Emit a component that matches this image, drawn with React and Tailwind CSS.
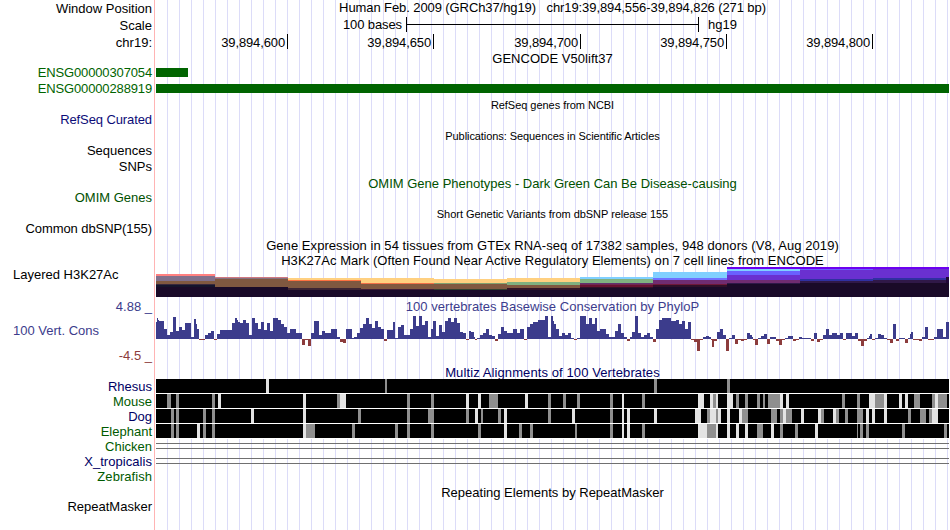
import React from "react"

// label column, top to bottom
const labels = [
  { text: "Window Position", cls: "mt-px text-right text-black" },
  { text: "Scale", cls: "mt-[2px] text-right text-black" },
  { text: "chr19:", cls: "mt-[2px] text-right text-black" },
  { text: "ENSG00000307054", cls: "mt-[15px] text-right tracking-[-0.14px] text-[#006400]" },
  { text: "ENSG00000288919", cls: "mt-px text-right tracking-[-0.14px] text-[#006400]" },
  { text: "RefSeq Curated", cls: "mt-4 text-right tracking-[-0.1px] text-[#0c0c78]" },
  { text: "Sequences", cls: "mt-4 text-right text-black" },
  { text: "SNPs", cls: "mt-px text-right text-black" },
  { text: "OMIM Genes", cls: "mt-4 text-right text-[#005000]" },
  { text: "Common dbSNP(155)", cls: "mt-4 text-right tracking-[-0.08px] text-black" },
  { text: "Layered H3K27Ac", cls: "mt-[31px] pl-[13px] text-left text-black" },
  { text: "4.88 _", cls: "mt-[17px] text-right text-[#3c3c8c]" },
  { text: "100 Vert. Cons", cls: "mt-[9px] pl-[13px] text-left text-[#3c3c8c]" },
  { text: "-4.5 _", cls: "mt-[10px] text-right text-[#8c3c3c]" },
  { text: "Rhesus", cls: "mt-4 text-right text-[#000064]" },
  { text: "Mouse", cls: "text-right text-[#005a00]" },
  { text: "Dog", cls: "text-right text-[#000064]" },
  { text: "Elephant", cls: "text-right text-[#005a00]" },
  { text: "Chicken", cls: "text-right text-[#005a00]" },
  { text: "X_tropicalis", cls: "text-right tracking-[0.05px] text-[#000064]" },
  { text: "Zebrafish", cls: "text-right tracking-[0.05px] text-[#005a00]" },
  { text: "RepeatMasker", cls: "mt-[15px] text-right text-black" },
]

const positions = [
  { text: "39,894,600", cls: "w-[132px]" },
  { text: "39,894,650", cls: "w-[146px]" },
  { text: "39,894,700", cls: "w-[147px]" },
  { text: "39,894,750", cls: "w-[146px]" },
  { text: "39,894,800", cls: "w-[146px]" },
]

// each column: start x, then [top y, colour] layers, painted down to y = 30
const h3k27ac = [
  { x: 0, layers: [[7, "#ff8080"], [9, "#80708c"], [14, "#805840"], [17, "#38283c"], [18, "#14142c"], [20, "#1a0a28"]] },
  { x: 59, layers: [[10, "#d07880"], [11, "#857080"], [12, "#805840"], [20, "#1a0a28"]] },
  { x: 132, layers: [[11, "#ffd080"], [13, "#ff7040"], [14, "#805840"], [21, "#3c2434"], [23, "#1a0a28"]] },
  { x: 205, layers: [[11, "#ffd080"], [16, "#f07048"], [17, "#805840"], [22, "#3c1c38"], [23, "#1a0a28"]] },
  { x: 278, layers: [[12, "#ffd080"], [16, "#80a070"], [17, "#805840"], [22, "#304030"], [23, "#1a0a28"]] },
  { x: 351, layers: [[11, "#ffd080"], [15, "#80b080"], [18, "#805840"], [21, "#301428"], [23, "#1a0a28"]] },
  { x: 424, layers: [[10, "#80d0ff"], [12, "#80b080"], [16, "#603070"], [17, "#702850"], [18, "#681030"], [20, "#301028"], [21, "#1a0a28"]] },
  { x: 497, layers: [[5, "#80d0ff"], [11, "#7070ff"], [13, "#702c70"], [17, "#701838"], [18, "#301028"], [20, "#1a0a28"]] },
  { x: 571, layers: [[0, "#6c00f0"], [2, "#80d0ff"], [4, "#6a60ff"], [8, "#6a30d0"], [13, "#702c70"], [16, "#301848"], [17, "#1a0a28"]] },
  { x: 644, layers: [[0, "#6c00f0"], [2, "#6a60ff"], [3, "#6a30d0"], [12, "#3030a0"], [14, "#301848"], [16, "#1a0a28"]] },
  { x: 717, layers: [[0, "#6c00f0"], [2, "#6a30d0"], [11, "#3030a0"], [13, "#301848"], [16, "#1a0a28"]] },
  { x: 790, layers: [[0, "#6c00f0"], [2, "#6a30d0"], [10, "#200838"], [16, "#1a0a28"]] },
]

// start x, score height (below the axis when negative)
const phyloP = [
  [0, 17], [1, 21], [2, 19], [3, 18], [8, 10], [11, 4], [14, 7], [17, 22], [20, 8], [23, 12], [26, 9], [29, 16],
  [35, 2], [38, 20], [40, 15], [41, 10], [43, -1], [49, 4], [52, 6], [55, 8], [58, -1], [61, 5], [64, 9], [76, 16],
  [79, 21], [81, 19], [82, 17], [84, 16], [87, 19], [90, 16], [93, 4], [96, 21], [99, 16], [102, 10], [105, 17],
  [108, 9], [111, 16], [114, 8], [117, 21], [122, 19], [125, 15], [128, 12], [131, 6], [134, 10], [140, 6],
  [146, -6], [149, -1], [152, -7], [155, 6], [158, 18], [163, 4], [166, 8], [169, 6], [175, 10], [181, 2],
  [184, -3], [187, -4], [190, 10], [196, 1], [198, 2], [201, 6], [204, 11], [207, 15], [210, 21], [213, 15],
  [216, 11], [219, 18], [222, 12], [225, 10], [228, -2], [231, 9], [237, 17], [239, 1], [242, 12], [245, 14],
  [248, 4], [254, 10], [257, 23], [260, 13], [263, 23], [266, 14], [269, 18], [272, 2], [275, 10], [277, 18],
  [280, 3], [283, 14], [286, 7], [289, 18], [292, 21], [295, 17], [298, 21], [301, 16], [304, 7], [307, 6],
  [310, -1], [313, 8], [315, 7], [318, 2], [319, -1], [321, 1], [324, 4], [327, 6], [330, 10], [333, 4], [336, 3],
  [339, -2], [342, 5], [345, 12], [348, 8], [351, 6], [357, 10], [361, 6], [364, 10], [368, -1], [371, 12],
  [374, 15], [377, 17], [382, 19], [389, 23], [392, 2], [395, 23], [397, 18], [398, 15], [400, 10], [403, 3],
  [406, 6], [409, 4], [412, 6], [415, 1], [418, -1], [421, 1], [424, 23], [430, 15], [433, 21], [436, 15],
  [439, 21], [441, 8], [444, 10], [450, 5], [453, 2], [459, 8], [462, 15], [465, 6], [468, 2], [471, -2],
  [474, 2], [476, 7], [479, 23], [482, 6], [485, 2], [488, 4], [491, 6], [494, 2], [497, -3], [500, 10], [503, 19],
  [506, 21], [515, 18], [520, 19], [523, 15], [526, 18], [529, 10], [532, 17], [535, -1], [538, -3], [541, -12],
  [544, -1], [547, 2], [550, 3], [553, 2], [555, -1], [556, -8], [558, -2], [561, 7], [564, 10], [567, 4],
  [570, -12], [573, 1], [576, 4], [579, -5], [582, -1], [585, -2], [588, -1], [591, 6], [594, 4], [596, 2],
  [597, -1], [599, -6], [602, 1], [605, 3], [608, 5], [611, -5], [614, 2], [620, -2], [623, -6], [626, -1],
  [629, 1], [632, 3], [637, -2], [640, -1], [643, 2], [646, 1], [655, -2], [658, 6], [661, -3], [664, -1],
  [667, 4], [670, 10], [673, 4], [676, 6], [681, 4], [684, 6], [687, -1], [690, 6], [696, 3], [699, 6], [702, -2],
  [705, -7], [708, -2], [711, 1], [713, 3], [714, 5], [716, -1], [719, 1], [722, 5], [725, 4], [728, 1], [731, -1],
  [734, -4], [737, 15], [740, -2], [743, 1], [749, -4], [752, 1], [754, 5], [755, 7], [757, -1], [763, -2],
  [766, 2], [769, 12], [772, -1], [778, 2], [781, 10], [787, 2], [790, 17], [793, 0],
]

// gaps in the alignment: start x, width. "light" is no match, "gray" is partial
const alignments = [
  { name: "Rhesus", light: [[110, 3]], gray: [[229, 2], [498, 3], [571, 3]] },
  {
    name: "Mouse",
    light: [
      [62, 3], [147, 3], [184, 6], [310, 3], [322, 3], [369, 3], [466, 2], [542, 6], [554, 3], [560, 2], [571, 6],
      [624, 3], [630, 3], [713, 6], [728, 3], [743, 3], [749, 3], [779, 3],
    ],
    gray: [
      [11, 4], [20, 3], [56, 3], [181, 3], [251, 3], [275, 3], [333, 9], [392, 3], [407, 3], [421, 3], [454, 3],
      [486, 3], [557, 3], [580, 3], [589, 3], [601, 3], [607, 2], [612, 12], [686, 3], [701, 3], [719, 9], [758, 6],
      [776, 3], [782, 9],
    ],
  },
  {
    name: "Dog",
    light: [
      [95, 3], [147, 3], [319, 3], [348, 3], [416, 3], [466, 2], [471, 3], [498, 3], [539, 6], [554, 6], [562, 3],
      [571, 3], [583, 3], [627, 3], [645, 3], [662, 3], [677, 3], [710, 3], [716, 3], [728, 3], [776, 6],
    ],
    gray: [
      [15, 3], [20, 3], [47, 3], [56, 3], [202, 3], [251, 3], [272, 6], [310, 3], [325, 2], [342, 3], [392, 3],
      [454, 3], [551, 3], [560, 2], [586, 6], [615, 6], [624, 3], [630, 6], [665, 3], [680, 3], [689, 3], [701, 6],
      [752, 3], [764, 6], [773, 3],
    ],
  },
  {
    name: "Elephant",
    light: [
      [41, 3], [147, 3], [348, 3], [466, 2], [471, 3], [542, 9], [560, 2], [571, 3], [580, 3], [589, 3], [615, 3],
      [659, 3],
    ],
    gray: [
      [15, 3], [20, 3], [47, 3], [56, 3], [150, 9], [196, 3], [239, 3], [251, 3], [275, 3], [322, 3], [363, 3],
      [374, 3], [419, 2], [454, 3], [486, 3], [551, 9], [601, 6], [624, 3], [639, 3], [701, 1], [704, 3], [710, 3],
      [746, 3], [788, 3],
    ],
  },
]

function Title({ className = "", children }) {
  return (
    <div className={`flex h-[15px] justify-center whitespace-pre leading-[15px] ${className}`}>
      <span>{children}</span>
    </div>
  )
}

function H3K27AcTrack() {
  return (
    <svg width="793" height="30" shapeRendering="crispEdges" className="block">
      {h3k27ac.map((col, i) => {
        const end = i + 1 < h3k27ac.length ? h3k27ac[i + 1].x : 793
        return col.layers.map(([y, fill]) => (
          <rect key={`${col.x}-${y}`} x={col.x} y={y} width={end - col.x} height={30 - y} fill={fill} />
        ))
      })}
    </svg>
  )
}

function PhyloPTrack() {
  return (
    <svg width="793" height="36" shapeRendering="crispEdges" className="block">
      {phyloP.slice(0, -1).map(([x, score], i) => (
        <rect
          key={x}
          x={x}
          y={score > 0 ? 23 - score : 23}
          width={phyloP[i + 1][0] - x}
          height={Math.abs(score)}
          fill={score > 0 ? "#3c3c8c" : "#8c3c3c"}
        />
      ))}
    </svg>
  )
}

function AlignmentRow({ light, gray }) {
  return (
    <svg width="793" height="15" shapeRendering="crispEdges" className="block bg-white">
      <rect width="793" height="14" fill="#000000" />
      {light.map(([x, w]) => (
        <rect key={x} x={x} width={w} height="14" fill="#e3e3e3" />
      ))}
      {gray.map(([x, w]) => (
        <rect key={x} x={x} width={w} height="14" fill="#8f8f8f" />
      ))}
    </svg>
  )
}

export default function App() {
  return (
    <div className="flex h-[530px] w-[950px] overflow-hidden bg-white font-['Liberation_Sans',Arial,sans-serif] text-[13px] text-black">
      {/* Track labels */}
      <div className="w-[155px] shrink-0 border-r border-[#ffb4b4]">
        {labels.map((label) => (
          <div key={label.text} className={`h-[15px] pr-[2px] leading-[15px] whitespace-pre ${label.cls}`}>
            {label.text}
          </div>
        ))}
      </div>

      {/* Tracks, over a guide line every 12px */}
      <div className="ml-px w-[793px] shrink-0 bg-[repeating-linear-gradient(to_right,transparent_0px,transparent_11px,#dcdcf8_11px,#dcdcf8_12px)]">
        <Title className="tracking-[-0.09px]">
          {"Human Feb. 2009 (GRCh37/hg19)   chr19:39,894,556-39,894,826 (271 bp)"}
        </Title>

        <div className="mt-[2px] flex h-[15px] leading-[15px]">
          <div className="w-[250px] pr-[4px] text-right tracking-[-0.1px]">100 bases</div>
          <div className="flex w-[293px] items-center border-x border-black">
            <div className="h-px w-full bg-black" />
          </div>
          <div className="pl-[9px]">hg19</div>
        </div>

        <div className="mt-[2px] flex h-[15px] leading-[17px] tracking-[-0.13px]">
          {positions.map((p) => (
            <div key={p.text} className={`border-r border-black pr-[2px] text-right ${p.cls}`}>
              {p.text}
            </div>
          ))}
        </div>

        <Title className="mt-[2px] tracking-[0.03px]">GENCODE V50lift37</Title>
        <div className="mt-[2px] h-[9px] w-8 bg-[#006400]" />
        <div className="mt-[7px] h-[9px] bg-[#006400]" />

        <Title className="mt-[5px] text-[11px] tracking-[-0.04px]">RefSeq genes from NCBI</Title>
        <Title className="mt-4 text-[11px] tracking-[-0.07px]">Publications: Sequences in Scientific Articles</Title>
        <Title className="mt-8 text-[#005000]">OMIM Gene Phenotypes - Dark Green Can Be Disease-causing</Title>
        <Title className="mt-4 text-[11px] tracking-[-0.04px]">Short Genetic Variants from dbSNP release 155</Title>
        <Title className="mt-4 tracking-[0.06px]">
          Gene Expression in 54 tissues from GTEx RNA-seq of 17382 samples, 948 donors (V8, Aug 2019)
        </Title>
        <Title className="tracking-[0.06px]">
          H3K27Ac Mark (Often Found Near Active Regulatory Elements) on 7 cell lines from ENCODE
        </Title>
        <div className="-mt-px">
          <H3K27AcTrack />
        </div>

        <Title className="mt-[2px] tracking-[0.03px] text-[#3c3c8c]">
          100 vertebrates Basewise Conservation by PhyloP
        </Title>
        <div className="mt-[2px]">
          <PhyloPTrack />
        </div>

        <Title className="mt-[13px] tracking-[0.1px] text-[#000064]">Multiz Alignments of 100 Vertebrates</Title>
        <div className="-mt-px">
          {alignments.map((a) => (
            <AlignmentRow key={a.name} light={a.light} gray={a.gray} />
          ))}
        </div>
        <div className="mt-[4px] h-[6px] border-y border-[#707070]" />
        <div className="mt-[9px] h-[6px] border-y border-[#707070]" />

        <Title className="mt-[21px]">Repeating Elements by RepeatMasker</Title>
        <div className="h-[31px]" />
      </div>
    </div>
  )
}
